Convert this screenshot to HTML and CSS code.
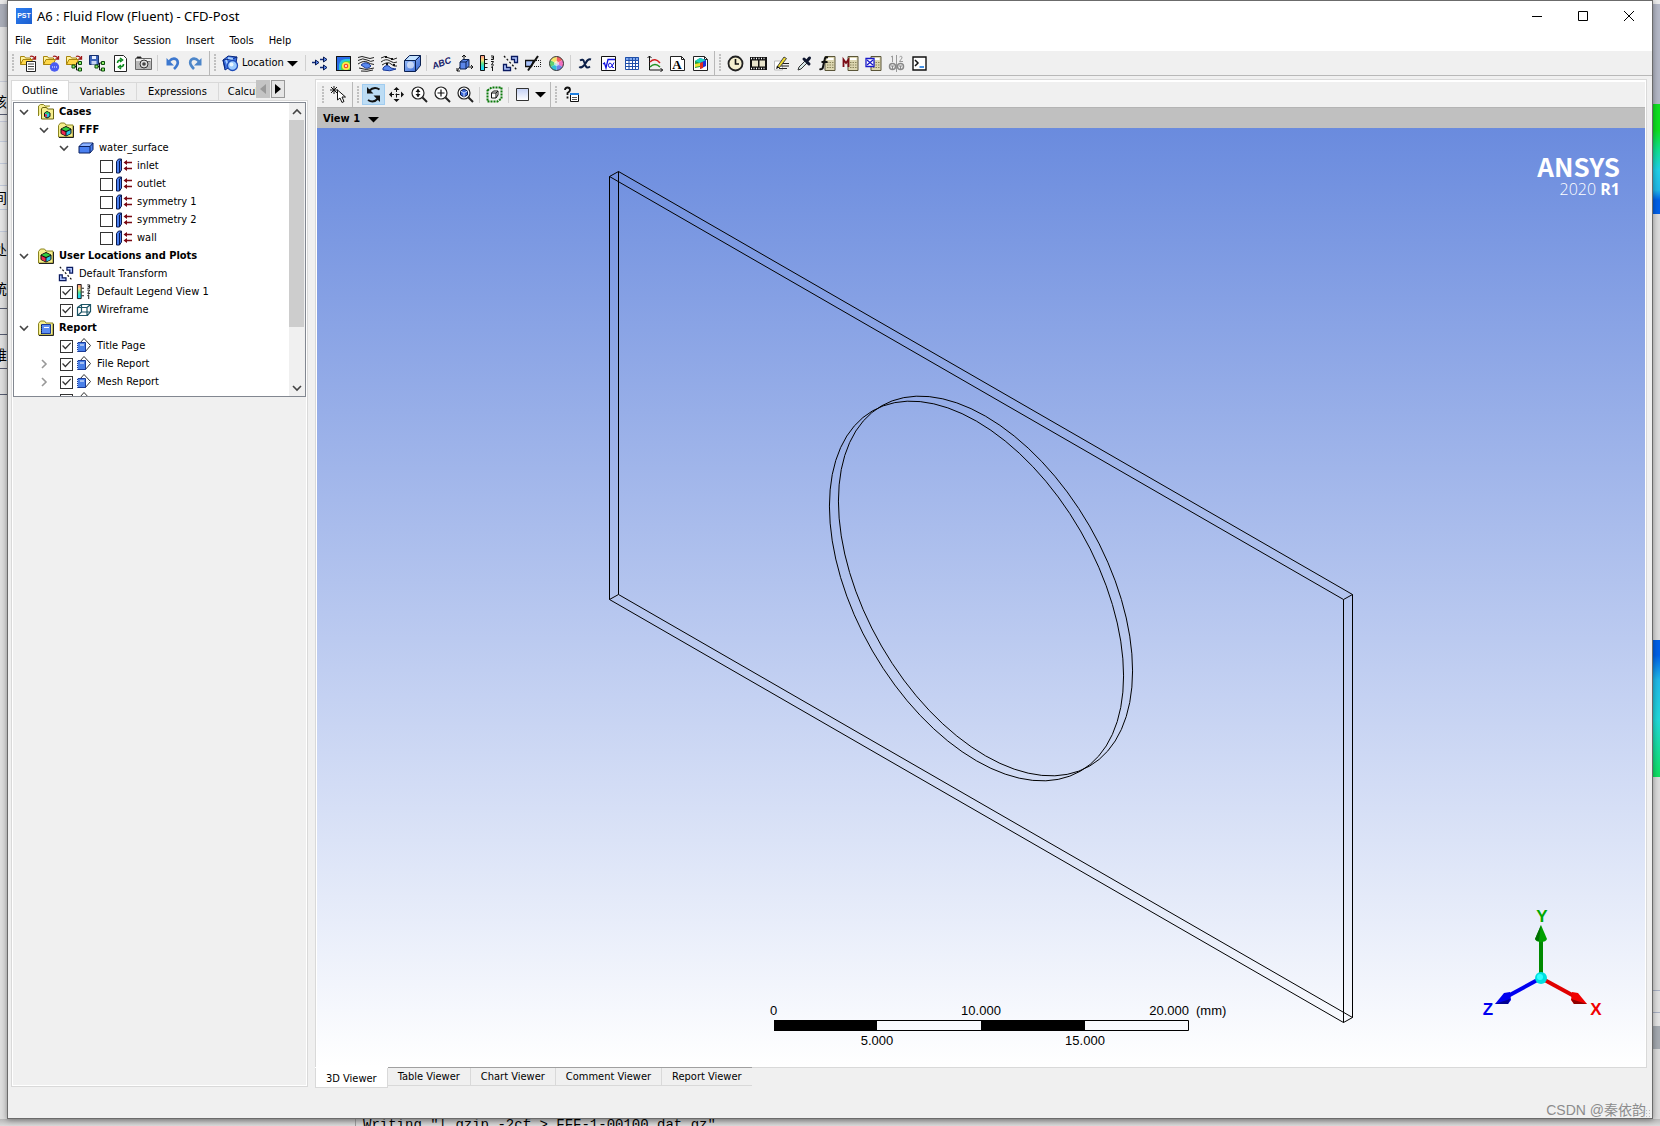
FILE: index.html
```html
<!DOCTYPE html>
<html lang="en">
<head>
<meta charset="utf-8">
<title>A6 : Fluid Flow (Fluent) - CFD-Post</title>
<link rel="stylesheet" href="styles.css">
</head>
<body>
<svg class="defs" aria-hidden="true">
  <defs>
    <linearGradient id="g-blue" x1="0" y1="0" x2="1" y2="1"><stop offset="0" stop-color="#a9ccff"/><stop offset="1" stop-color="#2f5fd0"/></linearGradient>
    <linearGradient id="g-pale" x1="0" y1="0" x2="0" y2="1"><stop offset="0" stop-color="#c3d0f5"/><stop offset="1" stop-color="#fff"/></linearGradient>
    <linearGradient id="g-rain" x1="0" y1="0" x2="0" y2="1"><stop offset="0" stop-color="#ff8a8a"/><stop offset=".3" stop-color="#ffe27a"/><stop offset=".55" stop-color="#5de08a"/><stop offset=".8" stop-color="#20d8f0"/><stop offset="1" stop-color="#20d8f0"/></linearGradient>
  </defs>
  <symbol id="folder" viewBox="0 0 17 17"><path d="M.5 9.500V1.500h4l1 1.500h5v2" fill="#fff3a0" stroke="#a8840c"/><path d="M.5 9.500l2.500-5h9.500l-2.500 5z" fill="#ffd84a" stroke="#a8840c"/><path d="M10 1.500q3-1.500 5 2M15.500 1v3h-3" fill="none" stroke="#a01818" stroke-width="1.300"/></symbol>
  <symbol id="open-case" viewBox="0 0 17 17"><use href="#folder"/><path d="M6.500 6.500h9v10h-9z" fill="#fff" stroke="#222"/><path d="M8 9h6M8 11.500h6M8 14h6" stroke="#444"/></symbol>
  <symbol id="open-res" viewBox="0 0 17 17"><use href="#folder"/><circle cx="11.500" cy="12" r="4.700" fill="#4b5cf0"/><path d="M9 12h1M11 12h1M13 12h1" stroke="#fff"/></symbol>
  <symbol id="nodes" viewBox="0 0 17 17"><path d="M8 11.500h2.500M10.500 8v7M10.500 8H12M10.500 15H12" stroke="#111" fill="none"/><path d="M6 10h3v3H6zM12.500 6.500h3v3h-3zM12.500 13h3v3h-3z" fill="#8df06a" stroke="#0a4a0a"/></symbol>
  <symbol id="open-state" viewBox="0 0 17 17"><use href="#folder"/><use href="#nodes"/></symbol>
  <symbol id="save-state" viewBox="0 0 17 17"><path d="M.5.500h9v9h-9z" fill="#3c63b8" stroke="#16306e"/><path d="M3 1h4v3H3z" fill="#e8f0ff"/><path d="M2.500 6h5v3.500h-5z" fill="#c8d4f0"/><use href="#nodes"/></symbol>
  <symbol id="refresh" viewBox="0 0 17 17"><path d="M2.500.500h9l3 3v13h-12z" fill="#fff" stroke="#222"/><path d="M5.500 8q0-3 3.500-3M8 3l2.500 2L8 7M11.500 9q0 3-3.500 3M9 10l-2.500 2L9 14" fill="none" stroke="#0a8a1c" stroke-width="1.600"/></symbol>
  <symbol id="camera" viewBox="0 0 17 17"><path d="M.5 3.500h16v11H.5z" fill="#b8b8b8" stroke="#666"/><path d="M2 3V2h4v1M11 6h4" stroke="#333"/><path d="M1 4h15v2H1z" fill="#eee"/><circle cx="9" cy="9" r="4" fill="#ddd" stroke="#333"/><circle cx="9" cy="9" r="1.800" fill="#444"/></symbol>
  <symbol id="undo" viewBox="0 0 17 17"><path d="M5 6.500Q9 2 12.500 4.500q3.500 3.500-2.500 9.500" fill="none" stroke="#3d78cf" stroke-width="2.600"/><path d="M2.500 3v7.500H10z" fill="#3d78cf"/></symbol>
  <symbol id="redo" viewBox="0 0 17 17"><path d="M12 6.500Q8 2 4.500 4.500 1 8 7 14" fill="none" stroke="#4d86c9" stroke-width="2.600"/><path d="M14.500 3v7.500H7z" fill="#4d86c9"/></symbol>
  <symbol id="location" viewBox="0 0 17 17"><path d="M1 5l4-3 1-1 9 1-1 6-11 7z" fill="#3b6fe0" stroke="#0a2a80"/><path d="M1 5l9-1 5-2M10 4l-1 6M3 13L1 5" fill="none" stroke="#0a2a80"/><path d="M4 5l2 5M6 3l5 1" stroke="#a8d0ff" stroke-width="2"/><circle cx="10.500" cy="10.500" r="5" fill="#9ccbff" stroke="#1d4bb8" stroke-width="1.300"/><circle cx="9.500" cy="9.500" r="2" fill="#e8f6ff"/></symbol>
  <symbol id="vector" viewBox="0 0 17 17"><path d="M0 7.500h4M8 4.500h4M8 12.500h4" stroke="#102a78" stroke-width="1.600"/><path d="M3.500 5l3.500 2.500L3.500 10zM11.500 2L15 4.500 11.500 7zM11.500 10l3.500 2.500-3.500 2.500z" fill="#5c8cf0" stroke="#081850"/></symbol>
  <symbol id="contour" viewBox="0 0 17 17"><path d="M1.500 1.500h14v14h-14z" fill="#2b6be8" stroke="#111"/><path d="M4 15V10q1-6 7-6h4v11z" fill="#27c8d8"/><path d="M6 15v-4q1-5 6-5h3v9z" fill="#4cd84c"/><circle cx="11" cy="11" r="4" fill="#ffe84a"/><circle cx="11" cy="11" r="2.300" fill="#f04a2a"/><circle cx="11" cy="11" r="1" fill="#fff"/><path d="M1.500 1.500h14v14h-14z" fill="none" stroke="#111"/></symbol>
  <symbol id="stream" viewBox="0 0 17 17"><path d="M3 10q5-5 10 1-4 4-7 1z" fill="#5a8af0" stroke="#1a3a98"/><path d="M0 2.500q4-2 8 0t8 0M0 5.500q5-3 9-.5t7 .5M0 9q6-4 9-2t7 2.500M1 13q7 3 15 0M3 16q6 1 12-1" fill="none" stroke="#222"/></symbol>
  <symbol id="particle" viewBox="0 0 17 17"><path d="M2 13q4-5 8 0 4 1 5 1-6 3-13 1z" fill="#5a8af0" stroke="#1a3a98"/><path d="M0 3q4-3 8 0t8 0M0 7q5-4 9-1t7 1M1 10q6-4 9-1t6 2" fill="none" stroke="#222"/><path d="M4 1h2v2H4zM10 3h2v2h-2zM5 8h2v2H5zM12 9h2v2h-2z" fill="#111"/></symbol>
  <symbol id="volume" viewBox="0 0 17 17"><path d="M.5 5.500l5-5h11v10l-5 6H.5z" fill="url(#g-blue)" stroke="#0a2050"/><path d="M.5 5.500h11v11M11.500 5.500l5-5" fill="none" stroke="#0a2050"/><path d="M2 5l4-4h9l-4 4z" fill="#c6e4ff"/><circle cx="6.500" cy="10" r="3.500" fill="#fff" opacity=".6"/></symbol>
  <symbol id="coord" viewBox="0 0 17 17"><path d="M8 5V0M6 2l2-2 2 2M12 12h5M15 10l2 2-2 2M4 12l-3 4M1 13v3h3" stroke="#111" fill="none"/><path d="M4 7l3-2.500h6v6L10 14H4z" fill="#5a86e8" stroke="#0a2050"/><path d="M4 7h6v7M10 7l3-2.500" fill="none" stroke="#0a2050"/></symbol>
  <symbol id="legend" viewBox="0 0 17 17"><path d="M1.500.500h4v15h-4z" fill="url(#g-rain)" stroke="#111"/><path d="M6 4.500h2.500M6 8.500h2.500M6 12.500h2.500" stroke="#111"/><path d="M12 1h2.500v3.500H12M12.500 2.800h2M12 6.500h2.500l-2 3.500h2.500M13.500 11.500V16M12 12.500l1.500-1" fill="none" stroke="#111"/></symbol>
  <symbol id="transform" viewBox="0 0 17 17"><path d="M1.500 9.500h3v3h4v3h-7zM9.500 1.500h6v6h-3v-3h-3z" fill="#b0c6ff" stroke="#0a1a60" stroke-width="1.300"/><path d="M2 1l13 14" stroke="#111" stroke-dasharray="2 2" stroke-width="1.300"/></symbol>
  <symbol id="clip" viewBox="0 0 17 17"><path d="M.5 5.500h8l-2 6h-6z" fill="#a9c2fa" stroke="#111" stroke-width="1.300"/><path d="M9 5.500h6.500v6H8" fill="none" stroke="#111" stroke-dasharray="1 1"/><path d="M3 15.500L13 1" stroke="#111" stroke-width="2"/></symbol>
  <symbol id="wheel" viewBox="0 0 17 17"><path d="M8.500 8.500V1.500a7 7 0 0 1 6 3.500z" fill="#f06060"/><path d="M8.500 8.500l6-3.500a7 7 0 0 1 0 7z" fill="#f070c0"/><path d="M8.500 8.500l6 3.500a7 7 0 0 1-6 3.500z" fill="#7080e8"/><path d="M8.500 8.500v7a7 7 0 0 1-6-3.500z" fill="#30c0d8"/><path d="M8.500 8.500L2.500 12a7 7 0 0 1 0-7z" fill="#60d070"/><path d="M8.500 8.500L2.500 5a7 7 0 0 1 6-3.500z" fill="#f8e468"/><circle cx="8.500" cy="8.500" r="2.500" fill="#fff" opacity=".6"/><circle cx="8.500" cy="8.500" r="7" fill="none" stroke="#333"/></symbol>
  <symbol id="variable" viewBox="0 0 17 17"><path d="M3 5.500q3-2 4 1l2 5q1 2 4 0M14 4.500q-3-1-5 3t-5 5q-1 0-1.500-1" fill="none" stroke="#0b1f48" stroke-width="2"/></symbol>
  <symbol id="expr" viewBox="0 0 17 17"><path d="M1.500 1.500h14v14h-14z" fill="#fff" stroke="#111"/><path d="M3 9l1.500-1L6 13l2-8.500h7" fill="none" stroke="#1010e0" stroke-width="1.300"/><path d="M14 7.500q-2 5-4 5-1.500 0-1.500-2.200T10 8q2 0 2.500 4.500h1.500" fill="none" stroke="#1010e0"/></symbol>
  <symbol id="table" viewBox="0 0 17 17"><path d="M2 2h14v13H2z" fill="#fff"/><path d="M2 2h14v3H2z" fill="#7fa8f0"/><path d="M2.500 2.500h13v12h-13zM2 5.500h14M2 8.500h14M2 11.500h14M6 2v13M9.500 2v13M12.500 2v13" fill="none" stroke="#1f4fa8"/></symbol>
  <symbol id="chart" viewBox="0 0 17 17"><path d="M3.500 1v14H17M1.500 3l2-2 2 2M14.500 13l2 2-2 2" fill="none" stroke="#111"/><path d="M4 7q5-5 10 1" fill="none" stroke="#d02020" stroke-width="1.500"/><path d="M4 12q5-5 10 0" fill="none" stroke="#209020" stroke-width="1.500"/></symbol>
  <symbol id="page" viewBox="0 0 17 17"><path d="M1.500 1.500h11l3 3v11h-14z" fill="#fff" stroke="#222"/><path d="M12.500 1.500v3h3" fill="none" stroke="#222"/></symbol>
  <symbol id="cube" viewBox="0 0 17 17"><path d="M3 6l5-3v9l-5 1z" fill="#20a040"/><path d="M8 3l6 2v6l-6 3z" fill="#2030d8"/><path d="M3 6l5-3 6 2-6 3z" fill="#20d0c0"/><path d="M8 8l3-1v6l-3 1z" fill="#e03020"/><path d="M3 9l5-1v3l-5 1z" fill="#f0e030"/></symbol>
  <symbol id="figure" viewBox="0 0 17 17"><use href="#page"/><use href="#cube"/></symbol>
  <symbol id="clock" viewBox="0 0 17 17"><circle cx="8.500" cy="8.500" r="7" fill="#f4efcf" stroke="#222" stroke-width="1.800"/><path d="M8.500 4v5H12" fill="none" stroke="#111" stroke-width="1.600"/></symbol>
  <symbol id="film" viewBox="0 0 17 17"><path d="M0 2h17v13H0z" fill="#111"/><path d="M2 5.500h6v6H2zM9.500 5.500H15v6H9.500z" fill="#e8e4cc"/><path d="M1 3.500h15M1 13.500h15" stroke="#fff" stroke-dasharray="1 1.500" stroke-width="1.500"/></symbol>
  <symbol id="edit" viewBox="0 0 17 17"><path d="M1.500 6h8v9h-8z" fill="#fff" stroke="#bbb"/><path d="M9 8.500h7M8 11h8M6 13.500h8" stroke="#222"/><path d="M4 12l7-10 2.500 1.500-7 9z" fill="#f0dc30" stroke="#444"/><path d="M3 14l1-3 2.500 1.500z" fill="#111"/></symbol>
  <symbol id="dropper" viewBox="0 0 17 17"><path d="M2 15l1-3 6-6 2 2-6 6z" fill="#d8e8e8" stroke="#333"/><path d="M8 4l5 5M11 6l2.500-3" stroke="#101830" stroke-width="3" stroke-linecap="round"/></symbol>
  <symbol id="calc" viewBox="0 0 17 17"><path d="M6 1.500h10v14H6z" fill="#dcd6b0" stroke="#5a5538"/><path d="M8 4h6.500" stroke="#fff" stroke-width="2"/><path d="M8 7.500h7M8 10h7M8 12.500h7" stroke="#8a845c" stroke-dasharray="1.500 1"/></symbol>
  <symbol id="fcalc" viewBox="0 0 17 17"><use href="#calc"/><path d="M9 2.500q-3-1-3.500 2.500L4 12q-.5 3-3.500 2M2.500 7h6" fill="none" stroke="#111" stroke-width="2"/></symbol>
  <symbol id="mcalc" viewBox="0 0 17 17"><use href="#calc"/><path d="M1.500 12V4.500l2.500 3.500 2.500-3.500V12" fill="none" stroke="#7a0a14" stroke-width="1.800"/></symbol>
  <symbol id="xcalc" viewBox="0 0 17 17"><use href="#calc"/><path d="M1 3.500h8v8H1z" fill="#fff" stroke="#1818c8" stroke-width="1.300"/><path d="M2 5l6 5M8 5l-6 5" stroke="#1818c8" stroke-width="1.300"/></symbol>
  <symbol id="compare" viewBox="0 0 17 17"><path d="M3 2l1.500-1v6M11.500 2q2.500-2 2.500 1l-2.500 3.500H15M8.500 0v17" fill="none" stroke="#999"/><circle cx="4.500" cy="11.500" r="3" fill="none" stroke="#888" stroke-width="1.500"/><circle cx="12.500" cy="11.500" r="3" fill="none" stroke="#888" stroke-width="1.500"/><path d="M3 11h3M4.500 11v3M11 11h3M12.500 11v3" stroke="#888"/></symbol>
  <symbol id="console" viewBox="0 0 17 17"><path d="M2 2h13v13H2z" fill="#fff" stroke="#111" stroke-width="1.400"/><path d="M4 5l3 3-3 3" fill="none" stroke="#111" stroke-width="1.500"/><path d="M8.500 12h4.500" stroke="#1878e0" stroke-width="1.600"/></symbol>
  <symbol id="select" viewBox="0 0 17 17"><path d="M4 0v8M0 4h8M1 1l6 6M7 1L1 7" stroke="#111"/><path d="M7.500 4v10l2.500-2 2 4.500 2-1-2-4.500h3.500z" fill="#fff" stroke="#111"/></symbol>
  <symbol id="rotate" viewBox="0 0 17 17"><path d="M4 5q5-5 10.500-1.500M13 12.500q-4.500 5-10 1.500" fill="none" stroke="#111" stroke-width="2"/><path d="M2 1v6.500h6.500zM15 16V9.500H8.500z" fill="#111"/></symbol>
  <symbol id="pan" viewBox="0 0 17 17"><path d="M8.500 2v13M2 8.500h13" stroke="#111" stroke-dasharray="4 1.500"/><path d="M5.500 4l3-3 3 3zM5.500 13l3 3 3-3zM4 5.500l-3 3 3 3zM13 5.500l3 3-3 3z" fill="#111"/></symbol>
  <symbol id="lens" viewBox="0 0 17 17"><circle cx="7" cy="7" r="6" fill="#fff" stroke="#222" stroke-width="1.200"/><path d="M11.500 11.500l4.500 4.500" stroke="#222" stroke-width="2"/></symbol>
  <symbol id="zoom" viewBox="0 0 17 17"><use href="#lens"/><path d="M7 3v8" stroke="#111"/><path d="M4.500 6L7 3l2.500 3zM4.500 8L7 11l2.500-3z" fill="#111"/></symbol>
  <symbol id="zoombox" viewBox="0 0 17 17"><use href="#lens"/><path d="M7 3.500v7M3.500 7h7" stroke="#111" stroke-width="1.200"/></symbol>
  <symbol id="fit" viewBox="0 0 17 17"><use href="#lens"/><path d="M3.500 5L7 3l3.500 2v4L7 11 3.500 9z" fill="#3a66d8" stroke="#081848"/><path d="M3.500 5L7 7l3.500-2M7 7v4" fill="none" stroke="#cfe0ff"/></symbol>
  <symbol id="highlight" viewBox="0 0 17 17"><path d="M1.500 4.500l4-3h10v11l-4 3h-10z" fill="none" stroke="#0a7a0a" stroke-width="2" stroke-dasharray="2 1"/><path d="M5.500 7l2-2h4.500v4l-2 3H5.500zM5.500 7H10v5M10 7l2-2" fill="#fff" stroke="#111"/></symbol>
  <symbol id="swatch" viewBox="0 0 17 17"><path d="M2.500 2.500h12v12h-12z" fill="url(#g-pale)" stroke="#333"/></symbol>
  <symbol id="help" viewBox="0 0 17 17"><path d="M2 4q0-2.500 2.500-2.500T7 4q0 1.500-2.500 3v2M4.500 10.500v2" fill="none" stroke="#111" stroke-width="1.800"/><path d="M7.500 7.500h8v8h-8z" fill="#fff" stroke="#111"/><path d="M7 8h9" stroke="#2080e0" stroke-width="2"/><path d="M9 11.500h5M9 13.500h5" stroke="#555"/></symbol>
  <symbol id="t-folder" viewBox="0 0 16 16"><path d="M.5 15V3.500l2-2.500h4l1.500 2h7v12z" fill="#f6ee8e" stroke="#8a8420"/><path d="M1 15.500h14.500V4" fill="none" stroke="#222"/></symbol>
  <symbol id="t-cube" viewBox="0 0 16 16"><path d="M3 7L8 4.500 13 7v4.500L8 14l-5-2.500z" fill="#111" stroke="#111"/><path d="M3.500 7L8 5l4.500 2L8 9z" fill="#30d040"/><path d="M3.500 8l4 2v3.500l-4-2z" fill="#f02850"/><path d="M12.500 8l-4 2v3.500l4-2z" fill="#28c8e8"/></symbol>
  <symbol id="t-case" viewBox="0 0 16 16"><path d="M.5 12V2l2-1.500h3L7 2h5" fill="#f6ee8e" stroke="#8a8420"/><path d="M3.500 15V5l1-1.500h4L9.500 5h6v10z" fill="#f6ee8e" stroke="#6a6410"/><path d="M6.500 9L9 7.500 12 9v3.500L9 14l-2.500-1.500z" fill="#28c8e8" stroke="#111"/><path d="M7 9l2-1 2.500 1L9 10z" fill="#30d040"/><path d="M7 10l2 .5V13l-2-1z" fill="#f02850"/></symbol>
  <symbol id="t-fff" viewBox="0 0 16 16"><use href="#t-folder"/><use href="#t-cube"/></symbol>
  <symbol id="t-report" viewBox="0 0 16 16"><use href="#t-folder"/><path d="M3.500 4.500h9v9h-9z" fill="#5c8cf0" stroke="#1a3a98"/><path d="M6 7.500h5" stroke="#fff"/><path d="M3.500 5v9" stroke="#0a1a50" stroke-dasharray="1 1"/></symbol>
  <symbol id="t-domain" viewBox="0 0 16 16"><path d="M1 6.500L4.500 3H15v6.500L12 13H1z" fill="#4a80f0" stroke="#0a2060"/><path d="M1 6.500h11V13M12 6.500L15 3" fill="none" stroke="#0a2060"/><path d="M2 6l3-2.500h9L11.500 6z" fill="#8fb4ff"/></symbol>
  <symbol id="t-bound" viewBox="0 0 16 16"><path d="M.5 3.500L2.500 1H5.500v11l-2 3h-3z" fill="#4a80f0" stroke="#0a1a50"/><path d="M3.500 3v12M3.500 3.500L5.500 1" stroke="#0a1a50"/><path d="M9 4.500h7M9 10.500h7" stroke="#7a0a14" stroke-width="1.300"/><path d="M7.500 4.500L11 2v5zM7.500 10.500L11 8v5z" fill="#7a0a14"/></symbol>
  <symbol id="t-wire" viewBox="0 0 16 16"><path d="M1.500 5.500l4-3h9v7l-3 4h-10zM1.500 5.500h9.500v8M11 5.500l3.500-3M5.500 2.500V10h9M5.500 10l-4 3.500" fill="none" stroke="#1c5566" stroke-width="1.200"/></symbol>
  <symbol id="t-page" viewBox="0 0 16 16"><path d="M4 5l4-4.500 6.500 7L9 14z" fill="#fff" stroke="#333"/><path d="M1.500 4.500h8v9h-8z" fill="#4a80e8" stroke="#1a3a98"/><path d="M4 7h4" stroke="#fff"/><path d="M1.500 4v10" stroke="#cfe0ff" stroke-dasharray="1 1"/></symbol>
  <symbol id="down" viewBox="0 0 11 11"><path d="M0 3h11L5.500 8.500z" fill="#000"/></symbol>
  <symbol id="chev-down" viewBox="0 0 10 10"><path d="M1 3l4 4 4-4" fill="none" stroke="#444" stroke-width="1.600"/></symbol>
  <symbol id="chev-up" viewBox="0 0 10 10"><path d="M1 7l4-4 4 4" fill="none" stroke="#444" stroke-width="1.600"/></symbol>
  <symbol id="chev-right" viewBox="0 0 10 10"><path d="M3 1l4 4-4 4" fill="none" stroke="#999" stroke-width="1.600"/></symbol>
</svg>

<div class="desktop">
  <div class="edge edge-left" aria-hidden="true"><span class="scrap s1">核</span><span class="scrap s2">间</span><span class="scrap s3">处</span><span class="scrap s4">统</span><span class="scrap s5">维</span></div>

  <div class="window">
    <header class="titlebar">
      <span class="app-logo">PST</span>
      <h1 class="title">A6 : Fluid Flow (Fluent) - CFD-Post</h1>
      <button class="win-btn" aria-label="Minimize"><svg viewBox="0 0 10 10"><path d="M0 5.500h10" stroke="#000"/></svg></button>
      <button class="win-btn" aria-label="Maximize"><svg viewBox="0 0 10 10"><path d="M.5.500h9v9h-9z" fill="none" stroke="#000"/></svg></button>
      <button class="win-btn" aria-label="Close"><svg viewBox="0 0 10 10"><path d="M0 0l10 10M10 0L0 10" stroke="#000"/></svg></button>
    </header>
    <nav class="menubar">
      <button>File</button><button>Edit</button><button>Monitor</button><button>Session</button><button>Insert</button><button>Tools</button><button>Help</button>
    </nav>

    <div class="toolbar main-tools">
      <div class="group">
        <i class="grip"></i>
        <button class="tool" aria-label="Load results"><svg><use href="#open-case"/></svg></button>
        <button class="tool" aria-label="Open results"><svg><use href="#open-res"/></svg></button>
        <button class="tool" aria-label="Load state"><svg><use href="#open-state"/></svg></button>
        <button class="tool" aria-label="Save state"><svg><use href="#save-state"/></svg></button>
        <button class="tool" aria-label="Refresh"><svg><use href="#refresh"/></svg></button>
        <button class="tool" aria-label="Save picture"><svg><use href="#camera"/></svg></button>
        <i class="sep"></i>
        <button class="tool" aria-label="Undo"><svg><use href="#undo"/></svg></button>
        <button class="tool" aria-label="Redo"><svg><use href="#redo"/></svg></button>
      </div>
      <div class="group">
        <i class="grip"></i>
        <button class="tool location"><svg><use href="#location"/></svg>Location<svg class="caret"><use href="#down"/></svg></button>
        <i class="sep"></i>
        <button class="tool" aria-label="Vector"><svg><use href="#vector"/></svg></button>
        <button class="tool" aria-label="Contour"><svg><use href="#contour"/></svg></button>
        <button class="tool" aria-label="Streamline"><svg><use href="#stream"/></svg></button>
        <button class="tool" aria-label="Particle track"><svg><use href="#particle"/></svg></button>
        <button class="tool" aria-label="Volume rendering"><svg><use href="#volume"/></svg></button>
        <i class="sep"></i>
        <button class="tool" aria-label="Text"><span class="abc">ABC</span></button>
        <button class="tool" aria-label="Coordinate frame"><svg><use href="#coord"/></svg></button>
        <button class="tool" aria-label="Legend"><svg><use href="#legend"/></svg></button>
        <button class="tool" aria-label="Instance transform"><svg><use href="#transform"/></svg></button>
        <button class="tool" aria-label="Clip plane"><svg><use href="#clip"/></svg></button>
        <button class="tool" aria-label="Color map"><svg><use href="#wheel"/></svg></button>
        <i class="sep"></i>
        <button class="tool" aria-label="Variable"><svg><use href="#variable"/></svg></button>
        <button class="tool" aria-label="Expression"><svg><use href="#expr"/></svg></button>
        <button class="tool" aria-label="Table"><svg><use href="#table"/></svg></button>
        <button class="tool" aria-label="Chart"><svg><use href="#chart"/></svg></button>
        <button class="tool" aria-label="Comment"><svg viewBox="0 0 17 17"><use href="#page"/><text x="8" y="14" text-anchor="middle" class="letter-a">A</text></svg></button>
        <button class="tool" aria-label="Figure"><svg><use href="#figure"/></svg></button>
      </div>
      <div class="group last">
        <i class="grip"></i>
        <button class="tool" aria-label="Timesteps"><svg><use href="#clock"/></svg></button>
        <button class="tool" aria-label="Animation"><svg><use href="#film"/></svg></button>
        <button class="tool" aria-label="Quick editor"><svg><use href="#edit"/></svg></button>
        <button class="tool" aria-label="Probe"><svg><use href="#dropper"/></svg></button>
        <button class="tool" aria-label="Function calculator"><svg><use href="#fcalc"/></svg></button>
        <button class="tool" aria-label="Macro calculator"><svg><use href="#mcalc"/></svg></button>
        <button class="tool" aria-label="Mesh calculator"><svg><use href="#xcalc"/></svg></button>
        <button class="tool" aria-label="Case comparison" disabled><svg><use href="#compare"/></svg></button>
        <button class="tool" aria-label="Command editor"><svg><use href="#console"/></svg></button>
      </div>
    </div>

    <main class="workspace">
      <aside class="sidebar">
        <div class="side-tabs">
          <button class="tab active">Outline</button><button class="tab">Variables</button><button class="tab">Expressions</button><button class="tab clipped">Calculators</button>
          <button class="scroll-btn off" aria-label="Previous tab"><svg viewBox="0 0 6 10"><path d="M6 0v10L0 5z" fill="#999"/></svg></button><button class="scroll-btn" aria-label="Next tab"><svg viewBox="0 0 6 10"><path d="M0 0v10l6-5z" fill="#000"/></svg></button>
        </div>
        <div class="side-page">
          <div class="tree-box">
            <ul class="tree">
              <li class="row l0 head"><svg class="chev"><use href="#chev-down"/></svg><svg><use href="#t-case"/></svg>Cases</li>
              <li class="row l1 head"><svg class="chev"><use href="#chev-down"/></svg><svg><use href="#t-fff"/></svg>FFF</li>
              <li class="row l2"><svg class="chev"><use href="#chev-down"/></svg><svg><use href="#t-domain"/></svg>water_surface</li>
              <li class="row l3"><label><input type="checkbox"><svg><use href="#t-bound"/></svg>inlet</label></li>
              <li class="row l3"><label><input type="checkbox"><svg><use href="#t-bound"/></svg>outlet</label></li>
              <li class="row l3"><label><input type="checkbox"><svg><use href="#t-bound"/></svg>symmetry 1</label></li>
              <li class="row l3"><label><input type="checkbox"><svg><use href="#t-bound"/></svg>symmetry 2</label></li>
              <li class="row l3"><label><input type="checkbox"><svg><use href="#t-bound"/></svg>wall</label></li>
              <li class="row l0 head"><svg class="chev"><use href="#chev-down"/></svg><svg><use href="#t-fff"/></svg>User Locations and Plots</li>
              <li class="row l1"><i class="chev"></i><svg><use href="#transform"/></svg>Default Transform</li>
              <li class="row l1"><i class="chev"></i><label><input type="checkbox" checked><svg><use href="#legend"/></svg>Default Legend View 1</label></li>
              <li class="row l1"><i class="chev"></i><label><input type="checkbox" checked><svg><use href="#t-wire"/></svg>Wireframe</label></li>
              <li class="row l0 head"><svg class="chev"><use href="#chev-down"/></svg><svg><use href="#t-report"/></svg>Report</li>
              <li class="row l1"><i class="chev"></i><label><input type="checkbox" checked><svg><use href="#t-page"/></svg>Title Page</label></li>
              <li class="row l1"><svg class="chev"><use href="#chev-right"/></svg><label><input type="checkbox" checked><svg><use href="#t-page"/></svg>File Report</label></li>
              <li class="row l1"><svg class="chev"><use href="#chev-right"/></svg><label><input type="checkbox" checked><svg><use href="#t-page"/></svg>Mesh Report</label></li>
              <li class="row l1"><i class="chev"></i><label><input type="checkbox" checked aria-label="Physics"><svg><use href="#t-page"/></svg></label></li>
            </ul>
            <div class="scrollbar">
              <button aria-label="Scroll up"><svg><use href="#chev-up"/></svg></button>
              <div class="track"><div class="thumb"></div></div>
              <button aria-label="Scroll down"><svg><use href="#chev-down"/></svg></button>
            </div>
          </div>
        </div>
      </aside>

      <section class="viewer">
        <div class="viewer-frame">
          <div class="toolbar view-tools">
            <div class="group">
              <i class="grip"></i>
              <button class="tool" aria-label="Select"><svg><use href="#select"/></svg></button>
            </div>
            <div class="group">
              <i class="grip"></i>
              <button class="tool pressed" aria-label="Rotate"><svg><use href="#rotate"/></svg></button>
              <button class="tool" aria-label="Pan"><svg><use href="#pan"/></svg></button>
              <button class="tool" aria-label="Zoom"><svg><use href="#zoom"/></svg></button>
              <button class="tool" aria-label="Zoom box"><svg><use href="#zoombox"/></svg></button>
              <button class="tool" aria-label="Fit view"><svg><use href="#fit"/></svg></button>
              <i class="sep"></i>
              <button class="tool" aria-label="Highlighting"><svg><use href="#highlight"/></svg></button>
              <i class="sep"></i>
              <button class="tool swatch" aria-label="Viewport layout"><svg><use href="#swatch"/></svg><svg class="caret"><use href="#down"/></svg></button>
            </div>
            <div class="group last">
              <i class="grip"></i>
              <button class="tool" aria-label="Viewer help"><svg><use href="#help"/></svg></button>
            </div>
          </div>
          <button class="viewbar">View 1<svg class="caret"><use href="#down"/></svg></button>
          <div class="canvas">
            <svg viewBox="317 128 1328 939">
              <g class="wire">
                <path d="M609.500 176.500l734 423v423l-734-423zM618.500 171.500l734 423v423l-734-423zM609.500 176.500l9-5M1343.500 599.500l9-5M1343.500 1022.500l9-5M609.500 599.500l9-5"/>
                <circle r="208" transform="matrix(.7071 .4082 0 .8165 976.500 591)"/>
                <circle r="208" transform="matrix(.7071 .4082 0 .8165 985.500 586)"/>
              </g>
              <text class="brand" x="1620" y="177" text-anchor="end">ANSYS</text>
              <text class="release" x="1620" y="195" text-anchor="end">2020 <tspan class="rev">R1</tspan></text>
              <g class="ruler">
                <path d="M774.500 1020.500h414v10h-414z" fill="none" stroke="#000"/>
                <path d="M774 1020h103v11H774zM981 1020h104v11H981z"/>
                <text x="770" y="1015">0</text>
                <text x="981" y="1015" text-anchor="middle">10.000</text>
                <text x="1189" y="1015" text-anchor="end">20.000</text>
                <text x="1196" y="1015">(mm)</text>
                <text x="877" y="1045" text-anchor="middle">5.000</text>
                <text x="1085" y="1045" text-anchor="middle">15.000</text>
              </g>
              <g class="triad">
                <path d="M1541 978V940" stroke="#008a00" stroke-width="4"/>
                <path d="M1541 925l6 14q-1 3-6 3t-6-3z" fill="#00a000"/>
                <path d="M1541 925l-2 16q-3 0-4-2z" fill="#007000"/>
                <path d="M1541 978l-33 18" stroke="#0000f0" stroke-width="4"/>
                <path d="M1495 1004l9-11 6-1 1 8-3 4z" fill="#0000f0"/>
                <path d="M1495 1004l15-5-2 5z" fill="#000090"/>
                <path d="M1541 978l33 18" stroke="#e00000" stroke-width="4"/>
                <path d="M1587 1004l-9-11-6-1-1 8 3 4z" fill="#f00000"/>
                <path d="M1587 1004l-16-5 3 5z" fill="#900000"/>
                <circle cx="1541" cy="978" r="6" fill="#00e0e0"/><circle cx="1540" cy="977" r="3" fill="#30ffff"/>
                <text x="1542" y="922" text-anchor="middle" fill="#00a800">Y</text>
                <text x="1596" y="1015" text-anchor="middle" fill="#f00000">X</text>
                <text x="1488" y="1015" text-anchor="middle" fill="#0000f0">Z</text>
              </g>
            </svg>
          </div>
        </div>
        <div class="view-tabs">
          <button class="vtab active">3D Viewer</button><button class="vtab">Table Viewer</button><button class="vtab">Chart Viewer</button><button class="vtab">Comment Viewer</button><button class="vtab">Report Viewer</button>
        </div>
      </section>
    </main>
    <div class="watermark">CSDN @秦依韵</div>
    <i class="size-grip"></i>
  </div>

  <div class="edge edge-right" aria-hidden="true"></div>
  <div class="edge edge-bottom"><code>Writing "| gzip -2cf &gt; FFF-1-00100.dat.gz"...</code></div>
</div>
</body>
</html>
```
FILE: styles.css
```css
* { box-sizing: border-box; }
body {
  margin: 0;
  font: 11px/16px "DejaVu Sans Condensed", "Liberation Sans", sans-serif;
  color: #000;
}
button {
  font: inherit;
  color: inherit;
  background: none;
  border: 0;
  padding: 0;
  white-space: nowrap;
}
svg { display: block; flex: none; }
.defs { width: 0; height: 0; position: absolute; }

/* desktop and the slivers of windows behind */
.desktop {
  display: grid;
  grid-template: minmax(0, 1fr) 7px / 7px minmax(0, 1fr) 7px;
  height: 100vh;
  overflow: hidden;
  background: #dcdcdc;
}
.edge { overflow: hidden; }
.edge-left {
  position: relative;
  background:
    linear-gradient(#555b70 0 0) 0 114px / 7px 1px no-repeat,
    linear-gradient(#555b70 0 0) 0 308px / 7px 1px no-repeat,
    linear-gradient(#555b70 0 0) 0 334px / 7px 1px no-repeat,
    linear-gradient(#555b70 0 0) 0 368px / 7px 1px no-repeat,
    linear-gradient(#555b70 0 0) 0 394px / 7px 1px no-repeat,
    linear-gradient(#e8e8e8 4px, #a9adb8 4px 27px, #e0e0e0 27px 81px, #c4c8d4 81px 82px, #e4e4e4 82px 121px, #c0c4d4 121px 122px, #dedede 122px 141px, #c0c8d8 141px 142px, #e4e4e4 142px 163px, #c0c8d8 163px 164px, #e4e4e4 164px 185px, #c0c8d8 185px 186px, #e8e8e8 186px 209px, #c0c8d8 209px 210px, #e4e4e4 210px 231px, #c0c8d8 231px 232px, #dedede 232px);
}
.scrap {
  position: absolute;
  right: 0;
  font: 14px/16px "Noto Sans CJK SC", sans-serif;
}
.s1 { top: 93px; }
.s2 { top: 189px; }
.s3 { top: 241px; }
.s4 { top: 280px; }
.s5 { top: 346px; }
.edge-right {
  background: linear-gradient(#ececec 4px, #b4b8c6 4px 104px, #10e020 104px 130px, #10e090 150px, #20d0e8 170px, #20b8e8 190px, #0060e8 200px 214px, #dcdcdc 214px 640px, #0060e8 640px 655px, #20b8e8 680px, #20d8d8 720px, #10e060 777px, #dcdcdc 777px 990px, #a8b0c4 990px 991px, #e0e0e0 991px 1012px, #a8b0c4 1012px 1013px, #e4e4e4 1013px 1026px, #a4a9b0 1026px 1049px, #dcdcdc 1049px);
}
.edge-bottom {
  grid-column: 1 / -1;
  padding-left: 355px;
  background: linear-gradient(#b8b8b8, #dadada);
}
.edge-bottom code {
  display: block;
  border-left: 1px solid #999;
  padding-left: 7px;
  font: 14px/12px "Liberation Mono", monospace;
}

/* application window */
.window {
  position: relative;
  display: flex;
  flex-direction: column;
  border: 1px solid #6b6b6b;
  background: #f0f0f0;
  box-shadow: 0 1px 6px rgba(0, 0, 0, .4);
  min-width: 0;
}
.titlebar {
  display: flex;
  align-items: center;
  height: 29px;
  padding-left: 8px;
  background: #fff;
}
.app-logo {
  width: 16px;
  height: 16px;
  background: linear-gradient(135deg, #2c7df0, #1c5fd0);
  color: #fff;
  font: bold 7px/16px "Liberation Sans", sans-serif;
  text-align: center;
}
.title {
  flex: 1;
  margin: 0 0 0 5px;
  font: 13px/16px "Noto Sans", sans-serif;
}
.win-btn {
  width: 46px;
  height: 28px;
  display: grid;
  place-items: center;
}
.win-btn svg { width: 10px; height: 10px; }
.menubar {
  display: flex;
  gap: 15px;
  height: 20px;
  padding: 2px 7px 0;
  background: #fff;
}

/* toolbars */
.toolbar { display: flex; }
.main-tools {
  height: 26px;
  border-top: 1px solid #fff;
  border-bottom: 1px solid #b8b8b8;
}
.group {
  display: flex;
  align-items: center;
  padding: 0 2px 0 4px;
  border-right: 1px solid #b8b8b8;
}
.group.last { border-right: 0; }
.grip {
  width: 2px;
  height: 18px;
  margin-right: 3px;
  background: repeating-linear-gradient(#c0c0c0 0 2px, transparent 2px 3px);
}
.sep {
  width: 1px;
  height: 16px;
  margin: 0 3px 0 2px;
  background: #d0d0d0;
}
.tool {
  width: 23px;
  height: 21px;
  display: flex;
  align-items: center;
  justify-content: center;
}
.tool svg { width: 17px; height: 17px; }
.tool .caret, .viewbar .caret { width: 11px; height: 11px; }
.location { width: auto; gap: 3px; padding: 0 5px 0 3px; }
.swatch { width: 36px; gap: 4px; }
.pressed { background: #bcdcf4; box-shadow: inset 0 0 0 1px #a0ccf0; }
.abc {
  font: bold italic 9px/9px "Liberation Sans", sans-serif;
  color: #16206a;
  transform: rotate(-20deg);
}
.letter-a { font: bold 13px "Liberation Serif", serif; }

/* workspace */
.workspace {
  flex: 1;
  min-height: 0;
  display: flex;
  gap: 7px;
  padding: 3px 5px 31px 3px;
}
.sidebar {
  width: 297px;
  flex: none;
  display: flex;
  flex-direction: column;
  padding-top: 1px;
}
.side-tabs {
  display: flex;
  align-items: flex-end;
  height: 20px;
}
.tab {
  height: 18px;
  padding: 0 11px;
  border: 1px solid #d9d9d9;
  border-width: 1px 1px 0 0;
}
.tab.active {
  height: 20px;
  padding: 0 10px;
  background: #fff;
  border-left-width: 1px;
}
.tab.clipped { width: 37px; overflow: hidden; text-align: left; border-right: 0; padding: 0 0 0 9px; }
.scroll-btn {
  align-self: flex-start;
  width: 14px;
  height: 18px;
  margin-right: 1px;
  display: grid;
  place-items: center;
  border: 1px solid #999;
  background: #e6e6e6;
}
.scroll-btn.off { background: #c4c4c4; border-color: #c4c4c4; }
.scroll-btn svg { width: 6px; height: 10px; }
.side-page {
  flex: 1;
  min-height: 0;
  border: 1px solid #d9d9d9;
  box-shadow: inset 0 0 0 1px #fff;
  padding: 1px;
}
.tree-box {
  display: flex;
  height: 295px;
  border: 1px solid #828790;
  background: #fff;
  overflow: hidden;
}
.tree {
  flex: 1;
  margin: 0;
  padding: 0 0 0 5px;
  list-style: none;
}
.row { display: flex; align-items: center; height: 18px; }
.row label { display: flex; align-items: center; padding-left: 2px; }
.row svg { width: 16px; height: 16px; margin-right: 5px; }
.row .chev { width: 10px; height: 10px; margin-right: 9px; flex: none; }
.head { font-weight: bold; }
.l1 { padding-left: 20px; }
.l2 { padding-left: 40px; }
.l3 { padding-left: 79px; }
.row input {
  appearance: none;
  width: 13px;
  height: 13px;
  margin: 0 3px 0 0;
  border: 1px solid #333;
  background: #fff;
}
.row input:checked::before {
  content: "";
  display: block;
  width: 11px;
  height: 11px;
  background: #333;
  clip-path: polygon(10% 50%, 18% 42%, 40% 64%, 84% 18%, 92% 26%, 40% 82%);
}
.scrollbar {
  width: 16px;
  display: flex;
  flex-direction: column;
  background: #f0f0f0;
}
.scrollbar button { height: 17px; display: grid; place-items: center; }
.scrollbar svg { width: 10px; height: 10px; }
.track { flex: 1; }
.thumb { height: 80%; margin-right: 1px; background: #cdcdcd; }

/* viewer */
.viewer {
  flex: 1;
  min-width: 0;
  display: flex;
  flex-direction: column;
}
.viewer-frame {
  flex: 1;
  min-height: 0;
  display: flex;
  flex-direction: column;
  border: 1px solid #d9d9d9;
  border-bottom: 0;
  padding: 2px 1px 0;
  background: #fff;
}
.view-tools { height: 25px; padding-left: 1px; background: #f0f0f0; }
.viewbar {
  display: flex;
  align-items: center;
  gap: 8px;
  height: 21px;
  padding: 2px 6px 0;
  border-top: 1px solid #b4b4b4;
  background: #c0c0c0;
  font-weight: bold;
}
.canvas {
  flex: 1;
  min-height: 0;
  background: linear-gradient(#6a8bde, #fff);
}
.canvas svg { width: 100%; height: 100%; }
.wire { fill: none; stroke: #000; }
.wire circle { vector-effect: non-scaling-stroke; }
.brand { font: bold 26px "Noto Sans CJK SC", sans-serif; fill: #fff; }
.release { font: 300 16px "Open Sans", sans-serif; fill: #fff; }
.rev { font-weight: 700; }
.ruler { font: 13px "Liberation Sans", sans-serif; }
.triad { font: bold 17px "Liberation Sans", sans-serif; }
.view-tabs {
  display: flex;
  align-items: flex-start;
  height: 20px;
  border-top: 1px solid #d9d9d9;
}
.vtab {
  height: 18px;
  padding: 1px 10px 0;
  border: 1px solid #d9d9d9;
  border-width: 0 1px 1px 0;
  box-shadow: 0 -1px #a0a0a0;
}
.vtab:last-child { border-right: 0; }
.vtab.active {
  height: 20px;
  padding-top: 2px;
  border-left-width: 1px;
  background: #fff;
  box-shadow: 0 -1px #fff;
}
.watermark {
  position: absolute;
  right: 6px;
  bottom: 0;
  font: 14px/16px "Liberation Sans", "Noto Sans CJK SC", sans-serif;
  color: #8c8c8c;
}
.size-grip {
  position: absolute;
  right: 2px;
  bottom: 1px;
  width: 8px;
  height: 8px;
  background: radial-gradient(#bbb 1px, transparent 1px) 0 0 / 3px 3px;
}
```
